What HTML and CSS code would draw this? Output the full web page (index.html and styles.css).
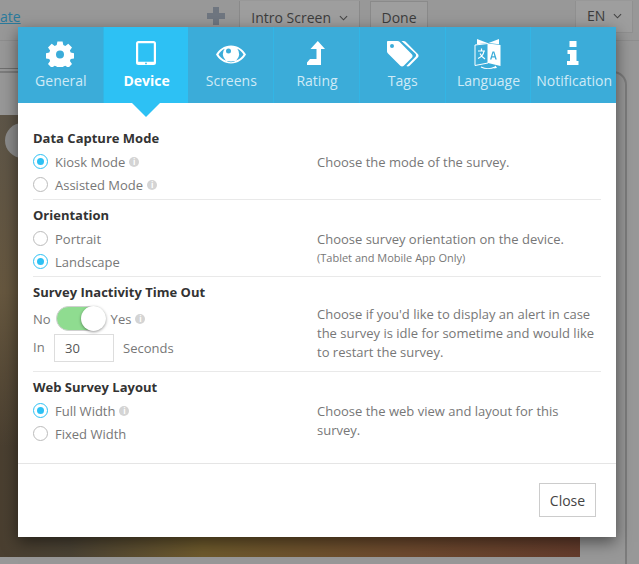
FILE: index.html
```html
<!DOCTYPE html>
<html lang="en">
<head>
<meta charset="utf-8">
<title>Survey Settings</title>
<link rel="stylesheet" href="styles.css">
</head>
<body>
<div class="page">
  <header class="topbar">
    <a class="create-link">ate</a>
    <span class="plus">
      <svg viewBox="0 0 20 20" width="20" height="20"><path d="M7 1h6v6h6v6h-6v6H7v-6H1V7h6z" fill="#6f7680"/></svg>
    </span>
    <span class="top-btn intro">Intro Screen <svg class="chev" viewBox="0 0 10 6" width="9" height="6"><path d="M1 1l4 4 4-4" fill="none" stroke="#444" stroke-width="1.2"/></svg></span>
    <span class="top-btn done">Done</span>
    <span class="top-btn lang">EN <svg class="chev" viewBox="0 0 10 6" width="9" height="6"><path d="M1 1l4 4 4-4" fill="none" stroke="#444" stroke-width="1.2"/></svg></span>
  </header>
  <div class="left-rule"></div>
  <div class="canvas-frame"></div>
  <div class="canvas-image"><span class="canvas-knob"></span></div>
</div>

<main class="modal">
  <nav class="tabs">
    <div class="tab">
      <svg class="tab-icon" viewBox="0 -1.500 28 28" width="28" height="28"><path fill="#fff" fill-rule="evenodd" d="M11.400 1h5.200l.7 3.600 2 .8 3-2.100 3.700 3.700-2.100 3 .8 2 3.600.7v5.200l-3.600.7-.8 2 2.100 3-3.700 3.700-3-2.100-2 .8-.7 3.600h-5.200l-.7-3.600-2-.8-3 2.100-3.700-3.700 2.100-3-.8-2-3.600-.7v-5.200l3.600-.7.8-2-2.100-3 3.700-3.700 3 2.100 2-.8zM14 10a4 4 0 1 0 0 8 4 4 0 0 0 0-8z"/></svg>
      <span>General</span>
    </div>
    <div class="tab active">
      <svg class="tab-icon" viewBox="0 0 28 28" width="28" height="28"><path fill="#fff" fill-rule="evenodd" d="M6.500 2h15A2.500 2.500 0 0 1 24 4.500v19a2.500 2.500 0 0 1-2.500 2.500h-15A2.500 2.500 0 0 1 4 23.500v-19A2.500 2.500 0 0 1 6.500 2zM6.200 4.300V22.800h15.600V4.300zM14 23.500a.9.900 0 1 0 0 1.800.9.900 0 0 0 0-1.800z"/></svg>
      <span>Device</span>
    </div>
    <div class="tab">
      <svg class="tab-icon" viewBox="0 -1.500 32 28" width="32" height="28"><path fill="#fff" fill-rule="evenodd" d="M16 5c6.800 0 12.200 4.300 15 9-2.800 4.700-8.200 9-15 9S3.800 18.700 1 14C3.800 9.300 9.200 5 16 5zM9.700 8.200C7 9.500 4.900 11.500 3.500 14 6 17.800 10.500 21 16 21s10-3.200 12.500-7c-1.400-2.500-3.500-4.500-6.200-5.800a8.200 8.200 0 1 1-12.600 0zM13.500 8a2.500 2.500 0 1 0 0 5 2.500 2.500 0 0 0 0-5z"/></svg>
      <span>Screens</span>
    </div>
    <div class="tab">
      <svg class="tab-icon" viewBox="0 0 28 28" width="28" height="28"><path fill="#fff" d="M14.800 2L22 10h-4v16H4v-2.500L7 20h6.500V10H7.500z"/></svg>
      <span>Rating</span>
    </div>
    <div class="tab">
      <svg class="tab-icon" viewBox="0 0 34 28" width="34" height="28"><path fill="#fff" fill-rule="evenodd" d="M3 2h9.500c.8 0 1.500.3 2 .8l12.300 12.400c1 1 1 2.500 0 3.500l-8 8c-1 1-2.500 1-3.500 0L3 14.500c-.6-.6-1-1.300-1-2V3c0-.6.400-1 1-1zM7 5a2 2 0 1 0 0 4 2 2 0 0 0 0-4z"/><path fill="#fff" d="M16.500 2h2.200c.8 0 1.400.3 2 .8L32.800 15c1 1 1 2.600 0 3.600l-8.200 8.200c-.9.900-2.300.9-3.200.2l8.900-8.900c1-1 1-2.600 0-3.600z"/></svg>
      <span>Tags</span>
    </div>
    <div class="tab">
      <svg class="tab-icon tall" viewBox="0 0 28 32" width="28" height="32">
        <path fill="none" stroke="#fff" stroke-width="1" d="M1 7l13-1.500V25L1 27.500z"/>
        <path fill="#fff" d="M14 5.500L26.500 7v21L14 25z"/>
        <path fill="#fff" d="M3 1l10.500 4L3 6.200zM25 1L14.500 5 25 6.200z"/>
        <path fill="#3bacd9" d="M16 21.500l2.500-8h1.800l2.500 8h-1.500l-.5-1.900h-2.800l-.5 1.900zm2.300-3.200h2.100l-1-3.700z"/>
        <path fill="none" stroke="#fff" stroke-width="1.200" d="M4 13h7M7.500 10.500V13M10 13c-.5 3.500-2.700 6-6 7.500M6 15.500c1 2.200 2.500 4 5 5.500"/>
        <path fill="none" stroke="#fff" stroke-width="1.100" d="M7 29c4 2 10 2 14 0"/>
        <path fill="#fff" d="M21.500 27.500l1.500 2.500-3.500.6z"/>
      </svg>
      <span>Language</span>
    </div>
    <div class="tab">
      <svg class="tab-icon" viewBox="0 0 28 28" width="28" height="28"><path fill="#fff" d="M9.500 2h7v6h-7zM7.500 11h9v11h2v4H7v-4h3v-7H7.500z"/></svg>
      <span>Notification</span>
    </div>
  </nav>

  <div class="modal-body">
    <section class="group head">
      <div class="group-left">
        <h2>Data Capture Mode</h2>
        <label class="radio-row"><span class="radio on"></span>Kiosk Mode<span class="info">i</span></label>
        <label class="radio-row"><span class="radio"></span>Assisted Mode<span class="info">i</span></label>
      </div>
      <div class="group-right"><p>Choose the mode of the survey.</p></div>
    </section>
    <section class="group">
      <div class="group-left">
        <h2>Orientation</h2>
        <label class="radio-row"><span class="radio"></span>Portrait</label>
        <label class="radio-row"><span class="radio on"></span>Landscape</label>
      </div>
      <div class="group-right">
        <p>Choose survey orientation on the device.</p>
        <p class="fine">(Tablet and Mobile App Only)</p>
      </div>
    </section>
    <section class="group timeout">
      <div class="group-left">
        <h2>Survey Inactivity Time Out</h2>
        <div class="switch-row">
          <span>No</span>
          <span class="switch"><span class="knob"></span></span>
          <span>Yes</span><span class="info">i</span>
        </div>
        <div class="seconds-row">
          <span class="in-label">In</span>
          <input class="seconds" type="text" value="30" aria-label="Seconds">
          <span>Seconds</span>
        </div>
      </div>
      <div class="group-right">
        <p>Choose if you'd like to display an alert in case the survey is idle for sometime and would like to restart the survey.</p>
      </div>
    </section>
    <section class="group last">
      <div class="group-left">
        <h2>Web Survey Layout</h2>
        <label class="radio-row"><span class="radio on"></span>Full Width<span class="info">i</span></label>
        <label class="radio-row"><span class="radio"></span>Fixed Width</label>
      </div>
      <div class="group-right"><p>Choose the web view and layout for this survey.</p></div>
    </section>
  </div>

  <footer class="modal-footer">
    <button class="close" type="button">Close</button>
  </footer>
</main>
</body>
</html>
```

FILE: styles.css
```css
* { box-sizing: border-box; }
html, body { margin: 0; height: 100%; }
body {
  position: relative;
  width: 639px;
  height: 564px;
  overflow: hidden;
  background: #989898;
  font-family: "Open Sans", sans-serif;
  color: #777;
}
.page { position: absolute; inset: 0; }
.topbar { height: 41px; position: relative; border-bottom: 1px solid #8e8e8e; }
.create-link {
  position: absolute; left: 0; top: 7px;
  font-size: 14px; color: #2a7a9c; text-decoration: underline;
}
.plus { position: absolute; left: 206px; top: 6px; }
.top-btn {
  position: absolute; top: 1px; height: 36px; padding-top: 7px;
  font-size: 14px; color: #3c3c3c; text-align: center;
  border: 1px solid #8a8a8a; background: #9e9e9e;
}
.intro { left: 239px; width: 121px; border-top: 0; }
.done { left: 370px; width: 58px; height: 28px; padding-top: 6px; }
.lang { left: 575px; width: 58px; height: 32px; padding: 5px 0 0 11px; text-align: left; border: 0; border-left: 1px solid #909090; border-bottom: 1px solid #909090; border-right: 1px solid #909090; }
.chev { margin-left: 4px; vertical-align: 2px; }
.left-rule { position: absolute; left: 0; top: 68px; width: 18px; height: 1px; background: #6f6f6f; }
.canvas-frame {
  position: absolute; left: -30px; top: 71px; width: 657px; height: 520px;
  border: 2px solid #7c7c7c; border-radius: 14px;
}
.canvas-image {
  position: absolute; left: 0; top: 115px; width: 580px; height: 442px;
  background:
    linear-gradient(180deg, #5d5548 0, #66573f 40%, rgba(90, 70, 50, 0) 75%),
    linear-gradient(90deg, #4a3f30 0, #4a4234 12%, #6e5a2c 35%, #6e4a2e 70%, #643c2c 100%);
}
.canvas-knob {
  position: absolute; left: 5px; top: 8px; width: 35px; height: 35px;
  border-radius: 50%; background: #8c8c8c;
}
.modal {
  position: absolute; left: 18px; top: 27px; width: 598px; height: 510px;
  background: #fff;
  box-shadow: 0 5px 15px rgba(0, 0, 0, .5);
  display: flex; flex-direction: column;
}
.tabs { display: flex; height: 76px; background: #3bacd9; flex: none; }
.tab {
  position: relative;
  flex: 1 1 0; min-width: 0;
  color: #cfeaf6;
  font-size: 14px; line-height: 19px;
  border-right: 1px solid #32b5e5;
}
.tab:last-child { border-right: 0; }
.tab-icon { position: absolute; top: 12px; left: 50%; transform: translateX(-50%); }
.tab-icon.tall { top: 11px; }
.tab span { position: absolute; top: 44px; left: 0; right: -1px; text-align: center; white-space: nowrap; }
.tab.active { background: #2dc1f4; color: #fff; font-weight: 700; border-right: 0; }
.tab.active::after {
  content: ""; position: absolute; left: 50%; bottom: -14px; margin-left: -14px;
  border-left: 14px solid transparent; border-right: 14px solid transparent;
  border-top: 14px solid #2dc1f4;
}
.modal-body { padding: 20px 15px 0; flex: 1; }
.group {
  display: flex; border-bottom: 1px solid #e9e9e9;
  height: 77px; padding-top: 6px;
}
.group.timeout { height: 95px; }
.group.last { border-bottom: 0; }
.group-left { width: 284px; flex: none; }
.group-right { flex: 1; font-size: 13px; line-height: 19px; color: #777; padding-top: 24px; }
.group.timeout .group-right { padding-top: 22px; }
.group-right p { margin: 0; }
.group-right .fine { font-size: 11px; line-height: 18px; }
h2 {
  margin: 0 0 3px; font-size: 13px; line-height: 18px; font-weight: 700; color: #333;
}
.radio-row {
  display: flex; align-items: center; height: 23px;
  font-size: 13px; color: #777;
}
.radio {
  width: 15px; height: 15px; margin-right: 7px; border-radius: 50%;
  border: 1px solid #bbb; background: #fff; flex: none; position: relative;
}
.radio.on { border-color: #2dc1f4; }
.radio.on::after {
  content: ""; position: absolute; left: 3px; top: 3px; width: 7px; height: 7px;
  border-radius: 50%; background: #2dc1f4;
}
.info {
  display: inline-block; width: 10px; height: 10px; margin-left: 4px; border-radius: 50%;
  background: #d4d4d4; color: #fff; font-size: 8px; line-height: 10px;
  font-weight: 700; text-align: center;
}
.switch-row { display: flex; align-items: center; height: 29px; font-size: 13px; color: #777; margin-top: 1px; }
.switch {
  width: 50px; height: 25px; margin: 0 5px; border-radius: 13px; position: relative;
  background: #8fdc90; border: 1px solid #d0d0d0; flex: none;
}
.knob {
  position: absolute; right: -1px; top: -1px; width: 25px; height: 25px; border-radius: 50%;
  background: #fff; box-shadow: 0 1px 3px rgba(0, 0, 0, .4);
}
.seconds-row { display: flex; align-items: center; font-size: 13px; color: #777; margin-top: 1px; }
.in-label { width: 21px; margin-top: -2px; }
.seconds {
  width: 60px; height: 28px; margin-right: 9px; padding: 0 10px;
  border: 1px solid #ddd; font: 13px "Open Sans", sans-serif; color: #555; outline: 0;
}
.modal-footer {
  height: 74px; flex: none; border-top: 1px solid #e5e5e5;
  display: flex; justify-content: flex-end; align-items: flex-start;
  padding: 19px 20px 0 0;
}
.close {
  width: 57px; height: 34px; background: #fff; border: 1px solid #ccc;
  font: 14px "Open Sans", sans-serif; color: #444; padding: 0;
}
```
